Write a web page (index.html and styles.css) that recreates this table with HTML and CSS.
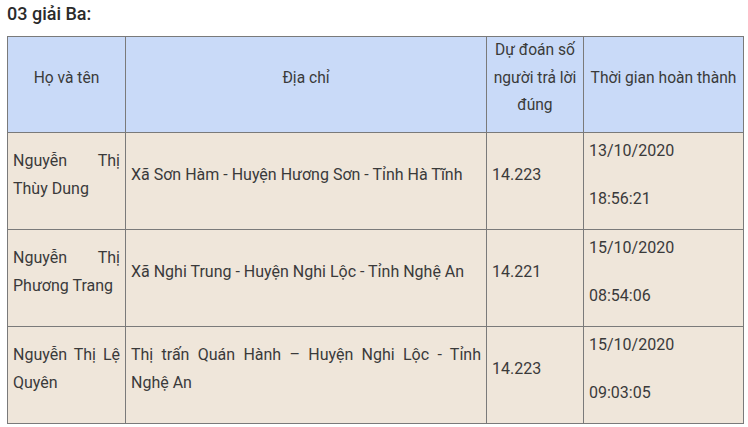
FILE: index.html
```html
<!DOCTYPE html>
<html lang="vi">
<head>
<meta charset="utf-8">
<link rel="stylesheet" href="styles.css">
</head>
<body>
<div class="page">
  <p class="title">03 giải Ba:</p>
  <table class="prize">
    <colgroup>
      <col class="c-name"><col class="c-addr"><col class="c-pred"><col class="c-time">
    </colgroup>
    <thead>
      <tr>
        <th>Họ và tên</th>
        <th>Địa chỉ</th>
        <th>Dự đoán số người trả lời đúng</th>
        <th>Thời gian hoàn thành</th>
      </tr>
    </thead>
    <tbody>
      <tr>
        <td class="just">Nguyễn Thị Thùy Dung</td>
        <td>Xã Sơn Hàm - Huyện Hương Sơn - Tỉnh Hà Tĩnh</td>
        <td>14.223</td>
        <td><p>13/10/2020</p><p>18:56:21</p></td>
      </tr>
      <tr>
        <td class="just">Nguyễn Thị Phương Trang</td>
        <td>Xã Nghi Trung - Huyện Nghi Lộc - Tỉnh Nghệ An</td>
        <td>14.221</td>
        <td><p>15/10/2020</p><p>08:54:06</p></td>
      </tr>
      <tr>
        <td class="just">Nguyễn Thị Lệ Quyên</td>
        <td class="just">Thị trấn Quán Hành – Huyện Nghi Lộc - Tỉnh Nghệ An</td>
        <td>14.223</td>
        <td><p>15/10/2020</p><p>09:03:05</p></td>
      </tr>
    </tbody>
  </table>
</div>
</body>
</html>
```
FILE: styles.css
```css
html, body {
  margin: 0;
  padding: 0;
  background: #ffffff;
}
.page {
  padding: 0 5px 0 7px;
  font-family: Roboto, "Noto Sans", Arial, sans-serif;
  color: #333333;
  font-size: 16px;
}
.title {
  margin: 0;
  padding-top: 2px;
  height: 34px;
  font-weight: 500;
  font-size: 18px;
  line-height: 24px;
  color: #2b2b2b;
}
.prize {
  border-collapse: collapse;
  width: 736px;
  table-layout: fixed;
  border: 1.5px solid #222222;
}
.c-name { width: 118px; }
.c-addr { width: 361px; }
.c-pred { width: 97px; }
.c-time { width: 160px; }
.prize th,
.prize td {
  border: 1px solid #7a7a7a;
  vertical-align: middle;
  padding: 0 5px 12px;
  line-height: 28px;
  font-weight: 400;
  color: #3a3a3a;
}
.prize thead tr {
  height: 95px;
}
.prize th {
  background: #c9daf8;
  text-align: center;
  line-height: 27.5px;
  padding-left: 2px;
  padding-right: 2px;
  font-size: 15.6px;
}
.prize tbody tr {
  height: 97px;
}
.prize td {
  background: #efe6da;
  text-align: left;
}
.prize td.just {
  text-align: justify;
}
.prize td p {
  margin: 0;
}
.prize td p + p {
  margin-top: 20px;
}
```
